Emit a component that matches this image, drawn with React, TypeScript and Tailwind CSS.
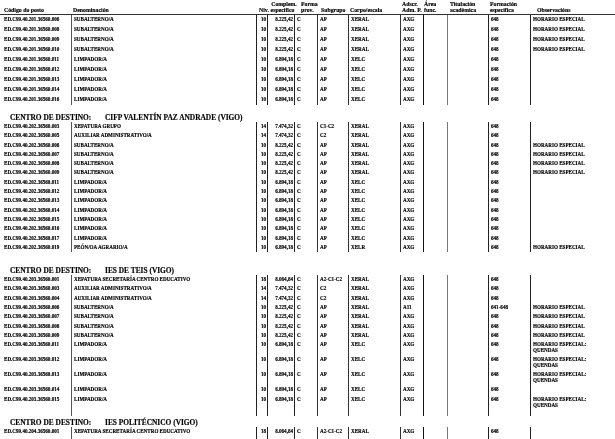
import React from "react";

const GRID =
  "grid grid-cols-[71px_185px_11px_27px_23px_31px_52px_23px_24px_41px_42px_85px]";

const CELL = [
  "pl-[4px]",
  "border-l border-[#555] pl-[2px]",
  "border-l border-[#222] pl-[4px]",
  "border-l border-[#222] pr-[1px] text-right",
  "border-l border-[#222] pl-[2px]",
  "border-l border-[#333] pl-[2px]",
  "border-l border-[#333] pl-[2px]",
  "border-l border-[#333] pl-[2px]",
  "border-l border-[#111] pl-[2px]",
  "border-l border-[#777] pl-[2px]",
  "border-l border-[#222] pl-[2px]",
  "border-l border-[#222] pl-[2px]",
];

type Row = {
  code: string;
  den: string;
  niv: string;
  comp: string;
  sub: string;
  corpo: string;
  adscr: string;
  form: string;
  obs: string[];
};

const SUB = (code: string, obs: string[] = ["HORARIO ESPECIAL"], adscr = "AXG", form = "648"): Row => ({
  code,
  den: "SUBALTERNO/A",
  niv: "10",
  comp: "8.225,42",
  sub: "AP",
  corpo: "XERAL",
  adscr,
  form,
  obs,
});

const LIM = (code: string, obs: string[] = []): Row => ({
  code,
  den: "LIMPADOR/A",
  niv: "10",
  comp: "6.894,18",
  sub: "AP",
  corpo: "XELC",
  adscr: "AXG",
  form: "648",
  obs,
});

const AUX = (code: string): Row => ({
  code,
  den: "AUXILIAR ADMINISTRATIVO/A",
  niv: "14",
  comp: "7.474,32",
  sub: "C2",
  corpo: "XERAL",
  adscr: "AXG",
  form: "648",
  obs: [],
});

const XSEC = (code: string): Row => ({
  code,
  den: "XEFATURA SECRETARÍA CENTRO EDUCATIVO",
  niv: "18",
  comp: "8.064,84",
  sub: "A2-C1-C2",
  corpo: "XERAL",
  adscr: "AXG",
  form: "648",
  obs: [],
});

const Q = ["HORARIO ESPECIAL:", "QUENDAS"];

const b1 = "ED.C99.40.201.36560.";
const block1: Row[] = [
  SUB(b1 + "006"),
  SUB(b1 + "008"),
  SUB(b1 + "009"),
  SUB(b1 + "010"),
  LIM(b1 + "011"),
  LIM(b1 + "012"),
  LIM(b1 + "013"),
  LIM(b1 + "014"),
  LIM(b1 + "016"),
];

const b2 = "ED.C99.40.202.36560.";
const block2: Row[] = [
  {
    code: b2 + "003",
    den: "XEFATURA GRUPO",
    niv: "14",
    comp: "7.474,32",
    sub: "C1-C2",
    corpo: "XERAL",
    adscr: "AXG",
    form: "648",
    obs: [],
  },
  AUX(b2 + "005"),
  SUB(b2 + "006"),
  SUB(b2 + "007"),
  SUB(b2 + "008"),
  SUB(b2 + "009"),
  LIM(b2 + "011"),
  LIM(b2 + "012"),
  LIM(b2 + "013"),
  LIM(b2 + "014"),
  LIM(b2 + "015"),
  LIM(b2 + "016"),
  LIM(b2 + "017"),
  {
    code: b2 + "019",
    den: "PEÓN/OA AGRARIO/A",
    niv: "10",
    comp: "6.894,18",
    sub: "AP",
    corpo: "XELR",
    adscr: "AXG",
    form: "648",
    obs: ["HORARIO ESPECIAL"],
  },
];

const b3 = "ED.C99.40.203.36560.";
const block3: Row[] = [
  XSEC(b3 + "001"),
  AUX(b3 + "003"),
  AUX(b3 + "004"),
  SUB(b3 + "006", ["HORARIO ESPECIAL"], "A11", "641-648"),
  SUB(b3 + "007"),
  SUB(b3 + "008"),
  SUB(b3 + "009"),
  LIM(b3 + "011", Q),
  LIM(b3 + "012", Q),
  LIM(b3 + "013", Q),
  LIM(b3 + "014"),
  LIM(b3 + "015", Q),
];

const block4: Row[] = [XSEC("ED.C99.40.204.36560.001")];

function DataRow({ r, pad }: { r: Row; pad: string }) {
  const vals: React.ReactNode[] = [
    r.code,
    r.den,
    r.niv,
    r.comp,
    "C",
    r.sub,
    r.corpo,
    r.adscr,
    "",
    "",
    r.form,
    r.obs.map((o, i) => <div key={i}>{o}</div>),
  ];
  return (
    <div className={GRID}>
      {vals.map((v, i) => (
        <div key={i} className={`${CELL[i]} ${pad} whitespace-nowrap leading-[5.8px]`}>
          {v}
        </div>
      ))}
    </div>
  );
}

function Spacer({ h }: { h: string }) {
  return (
    <div className={`${GRID} ${h}`}>
      {CELL.map((c, i) => (
        <div key={i} className={c} />
      ))}
    </div>
  );
}

function Section({ name, h }: { name: string; h: string }) {
  return (
    <div className={`flex items-end ${h} pl-[10px] text-[7.4px] leading-[8px] font-bold`}>
      <span className="w-[95px]">CENTRO DE DESTINO:</span>
      <span>{name}</span>
    </div>
  );
}

function Header() {
  const H = "whitespace-nowrap";
  return (
    <div className={`${GRID} border-b-[1.5px] border-[#333] pt-[1px] pb-[0.5px] text-[5.8px] leading-[6px]`}>
      <div className={`${H} pl-[4px] flex flex-col justify-end`}>Código do posto</div>
      <div className={`${H} pl-[2px] flex flex-col justify-end`}>Denominación</div>
      <div className={`${H} pl-[3px] flex flex-col justify-end`}>Niv.</div>
      <div className={`${H} pl-[4px] flex flex-col justify-end items-center`}>
        <span className="pl-[3px]">Complem.</span>
        <span>específico</span>
      </div>
      <div className={`${H} pl-[7px] flex flex-col justify-end`}>
        <span>Forma</span>
        <span>prov.</span>
      </div>
      <div className={`${H} pl-[4px] flex flex-col justify-end`}>Subgrupo</div>
      <div className={`${H} pl-[2px] flex flex-col justify-end`}>Corpo/escala</div>
      <div className={`${H} pl-[2px] flex flex-col justify-end`}>
        <span>Adscr.</span>
        <span>Adm. P.</span>
      </div>
      <div className={`${H} pl-[1px] flex flex-col justify-end`}>
        <span>Área</span>
        <span>func.</span>
      </div>
      <div className={`${H} pl-[3px] flex flex-col justify-end`}>
        <span>Titulación</span>
        <span>académica</span>
      </div>
      <div className={`${H} pl-[2px] flex flex-col justify-end`}>
        <span>Formación</span>
        <span>específica</span>
      </div>
      <div className={`${H} pl-[7px] flex flex-col justify-end`}>Observacións</div>
    </div>
  );
}

export default function App() {
  return (
    <div
      className="w-[615px] h-[439px] overflow-hidden bg-white text-black font-bold text-[5.1px] grayscale [-webkit-text-stroke:0.15px_#000]"
      style={{ fontFamily: '"Liberation Serif", "Times New Roman", serif' }}
    >
      <Header />
      {block1.map((r, i) => (
        <DataRow key={i} r={r} pad="py-[2.15px]" />
      ))}
      <Section name="CIFP VALENTÍN PAZ ANDRADE (VIGO)" h="h-[17px]" />
      {block2.map((r, i) => (
        <DataRow key={i} r={r} pad="py-[1.75px]" />
      ))}
      <Section name="IES DE TEIS (VIGO)" h="h-[23px]" />
      {block3.map((r, i) => (
        <DataRow key={i} r={r} pad="py-[1.75px]" />
      ))}
      <Spacer h="h-[6px]" />
      <Section name="IES POLITÉCNICO (VIGO)" h="h-[11px]" />
      {block4.map((r, i) => (
        <DataRow key={i} r={r} pad="py-[1.75px]" />
      ))}
      <Spacer h="h-[10px]" />
    </div>
  );
}
